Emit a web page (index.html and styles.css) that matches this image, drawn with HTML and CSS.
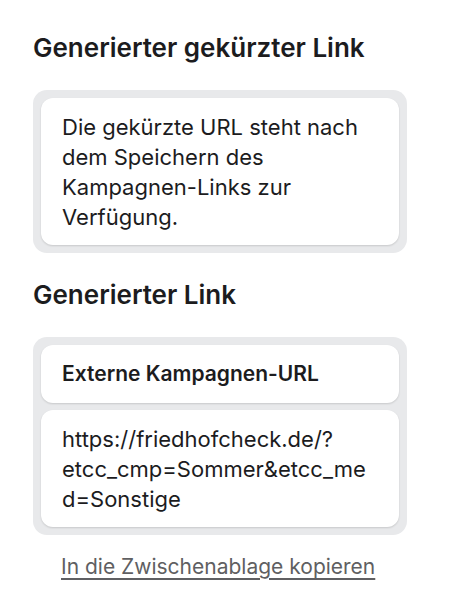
FILE: index.html
```html
<!DOCTYPE html>
<html lang="de">
<head>
<meta charset="utf-8">
<link rel="stylesheet" href="styles.css">
</head>
<body>
<main class="page">
  <section class="block">
    <h2 class="title">Generierter gekürzter Link</h2>
    <div class="card">
      <div class="inner">
        <p class="text">Die gekürzte URL steht nach dem Speichern des Kampagnen-Links zur Verfügung.</p>
      </div>
    </div>
  </section>
  <section class="block block-second">
    <h2 class="title">Generierter Link</h2>
    <div class="card">
      <div class="inner inner-head">
        <p class="label">Externe Kampagnen-URL</p>
      </div>
      <div class="inner">
        <p class="text url">https://friedhofcheck.de/?etcc_cmp=Sommer&amp;etcc_med=Sonstige</p>
      </div>
    </div>
    <a class="copy" href="#">In die Zwischenablage kopieren</a>
  </section>
</main>
</body>
</html>
```

FILE: styles.css
```css
html, body {
  margin: 0;
  padding: 0;
  background: #ffffff;
}
body {
  font-family: Inter, "Noto Sans", "Liberation Sans", sans-serif;
  color: #1c1c1e;
}
.page {
  width: 374px;
  padding: 32px 0 0 33px;
}
.block {
  display: flex;
  flex-direction: column;
}
.block-second {
  margin-top: 26px;
}
.title {
  margin: 0 0 26px 0;
  font-size: 26px;
  line-height: 32px;
  font-weight: 600;
  color: #1c1c1e;
}
.card {
  background: #e8e9eb;
  border-radius: 14px;
  padding: 8px;
  display: flex;
  flex-direction: column;
  gap: 7px;
}
.inner {
  background: #ffffff;
  border-radius: 12px;
  padding: 14px 23px 13px 21px;
  box-shadow: 0 1px 2px rgba(0, 0, 0, 0.14);
}
.inner-head {
  padding-bottom: 14px;
}
.text {
  margin: 0;
  font-size: 22px;
  line-height: 30px;
  font-weight: 400;
  color: #1c1c1e;
}
.url {
  overflow-wrap: anywhere;
}
.label {
  margin: 0;
  font-size: 21px;
  line-height: 30px;
  font-weight: 600;
  color: #1c1c1e;
}
.copy {
  align-self: flex-start;
  margin: 17px 0 0 28px;
  font-size: 21px;
  line-height: 30px;
  color: #5f5f62;
  text-decoration: underline;
  text-underline-offset: 4px;
  text-decoration-thickness: 2px;
}
```
